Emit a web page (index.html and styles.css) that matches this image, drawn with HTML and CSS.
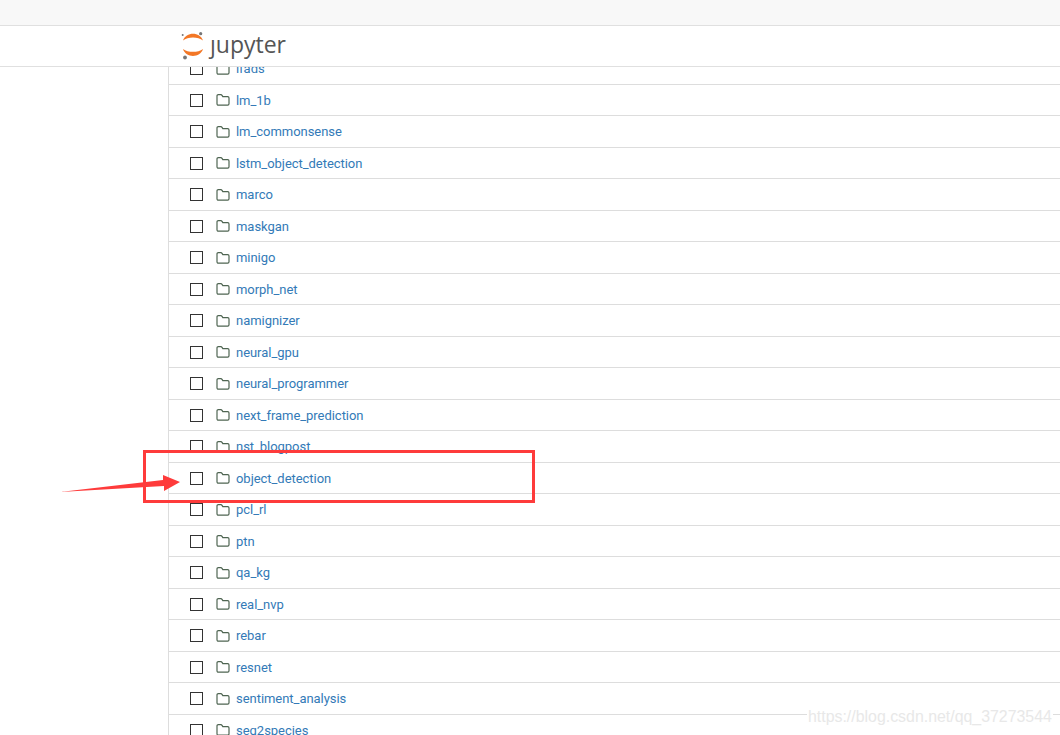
FILE: index.html
```html
<!DOCTYPE html>
<html lang="en">

<head>
    <meta charset="UTF-8">
    <title>Jupyter</title>
    <link rel="stylesheet" href="styles.css">
</head>

<body>
    <div class="topbar"></div>

    <header class="header">
        <svg class="logo-mark" width="24" height="28" viewBox="0 0 24 28">
            <path class="logo-arc" d="M2 8.5C5 -.5 19 -.5 22 8.5C17 4.6 7 4.6 2 8.5Z" />
            <path class="logo-arc" d="M2 17C5 26.3 19 26.3 22 17C17 20.8 7 20.8 2 17Z" />
            <circle class="logo-dot" cx="19.7" cy="1.7" r="1.6" />
            <circle class="logo-dot" cx="1.7" cy="3" r="1" />
            <circle class="logo-dot" cx="4" cy="25.5" r="1.9" />
        </svg>
        <span class="logo-text">ȷupyter</span>
    </header>

    <main class="page">
        <ul class="file-list" id="file-list"></ul>
    </main>

    <!-- annotation drawn on top of the screenshot -->
    <div class="mark-box"></div>
    <svg class="mark-arrow" width="130" height="24" viewBox="0 0 130 24">
        <polygon points="0,22 103,10 103,5 120,12 104,21 104,16" />
    </svg>
    <div class="watermark">https://blog.csdn.net/qq_37273544</div>

    <script>
        const folders = [
            "lfads", "lm_1b", "lm_commonsense", "lstm_object_detection", "marco",
            "maskgan", "minigo", "morph_net", "namignizer", "neural_gpu",
            "neural_programmer", "next_frame_prediction", "nst_blogpost",
            "object_detection", "pcl_rl", "ptn", "qa_kg", "real_nvp", "rebar",
            "resnet", "sentiment_analysis", "seq2species"
        ];

        const list = document.getElementById("file-list");
        folders.forEach(name => {
            const row = document.createElement("li");
            row.className = "file-row";
            row.innerHTML = `
                <span class="file-check"></span>
                <svg class="file-icon" width="14" height="12" viewBox="0 0 14 12">
                    <path d="M1 9.8V2C1 1.2 1.6 .7 2.3 .7H4.8C5.5 .7 5.8 1 6.2 1.6L6.8 2.6H11.7C12.4 2.6 13 3.2 13 3.9V9.8C13 10.6 12.4 11.2 11.7 11.2H2.3C1.6 11.2 1 10.6 1 9.8Z" />
                </svg>
                <a class="file-name" href="#">${name}</a>
            `;
            list.appendChild(row);
        });
    </script>
</body>

</html>
```
FILE: styles.css
```css
html,
body {
    margin: 0;
    padding: 0;
    height: 735px;
    overflow: hidden;
    background: #fff;
    font-family: Roboto, "Liberation Sans", Arial, sans-serif;
}

.topbar {
    height: 25px;
    background: #f8f8f8;
    border-bottom: 1px solid #e0e0e0;
}

.header {
    height: 40px;
    display: flex;
    align-items: center;
    padding-left: 181px;
    background: #fff;
    border-bottom: 1px solid #e0e0e0;
}

.logo-mark {
    display: block;
}

.logo-arc {
    fill: #f37726;
}

.logo-dot {
    fill: #767677;
}

.logo-text {
    margin: -5px 0 0 5px;
    font-family: "Open Sans", sans-serif;
    font-size: 23px;
    line-height: 28px;
    color: #555;
}

.page {
    height: 668px;
    margin-left: 168px;
    overflow: hidden;
    border-left: 1px solid #ddd;
}

.file-list {
    list-style: none;
    margin: -14px 0 0;
    padding: 0;
}

.file-row {
    display: flex;
    align-items: center;
    box-sizing: border-box;
    height: 31.5px;
    padding: 1px 0 0 21px;
    border-bottom: 1px solid #ddd;
}

.file-check {
    box-sizing: border-box;
    width: 13px;
    height: 13px;
    border: 1.5px solid #333;
    background: #fff;
}

.file-icon {
    display: block;
    margin-left: 13px;
    fill: none;
    stroke: #4f6552;
    stroke-width: 1.2;
}

.file-name {
    margin-left: 6px;
    font-size: 13px;
    letter-spacing: -0.04px;
    color: #337ab7;
    text-decoration: none;
}

.mark-box {
    position: absolute;
    left: 143px;
    top: 450px;
    width: 386px;
    height: 47px;
    border: 3px solid #fe3b3b;
}

.mark-arrow {
    position: absolute;
    left: 60px;
    top: 470px;
    fill: #fe3b3b;
}

.watermark {
    position: absolute;
    left: 807px;
    top: 707px;
    padding: 0 1px;
    font-family: "Liberation Sans", Arial, sans-serif;
    font-size: 15.9px;
    line-height: 20px;
    color: #e8e8e8;
    background: #fff;
}
```
